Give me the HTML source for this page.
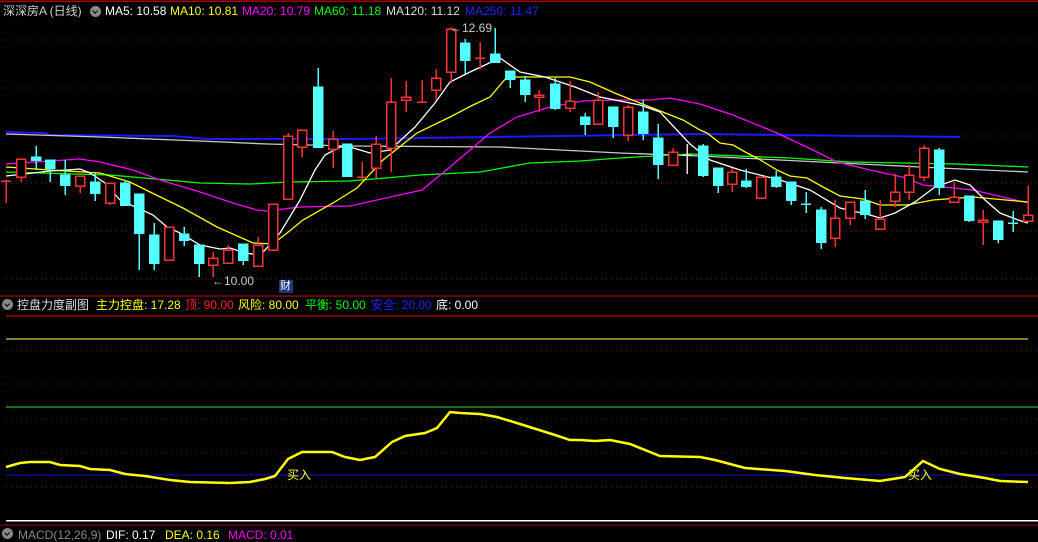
<!DOCTYPE html>
<html><head><meta charset="utf-8"><style>
html,body{margin:0;padding:0;background:#000;width:1038px;height:532px;overflow:hidden}
.t{position:absolute;font-family:"Liberation Sans","Noto Sans CJK SC",sans-serif;font-size:12px;white-space:nowrap;line-height:14px}
.ic{position:absolute;width:11px;height:11px;border-radius:50%;background:#888}
.ic:after{content:"";position:absolute;left:3px;top:3px;width:3px;height:3px;border-right:1.5px solid #000;border-bottom:1.5px solid #000;transform:rotate(45deg)}
</style></head><body>
<svg width="1038" height="532" style="position:absolute;left:0;top:0">
<g shape-rendering="crispEdges">
<line x1="0" y1="1" x2="1038" y2="1" stroke="#a00" stroke-width="1.5"/>
<g stroke="#8a1010" stroke-dasharray="1,4">
<line x1="6" y1="40" x2="1038" y2="40"/><line x1="6" y1="88" x2="1038" y2="88"/><line x1="6" y1="136" x2="1038" y2="136"/><line x1="6" y1="183" x2="1038" y2="183"/><line x1="6" y1="231" x2="1038" y2="231"/><line x1="6" y1="279" x2="1038" y2="279"/>
<line x1="6" y1="350" x2="1038" y2="350"/><line x1="6" y1="384" x2="1038" y2="384"/><line x1="6" y1="419" x2="1038" y2="419"/><line x1="6" y1="453" x2="1038" y2="453"/><line x1="6" y1="487" x2="1038" y2="487"/>
</g>
<line x1="0" y1="296" x2="1038" y2="296" stroke="#c00"/>
<line x1="6" y1="316" x2="1038" y2="316" stroke="#e00"/>
<line x1="6" y1="339" x2="1028" y2="339" stroke="#ffff40"/>
<line x1="6" y1="407" x2="1038" y2="407" stroke="#30e030"/>
<line x1="6" y1="475" x2="1038" y2="475" stroke="#1010d0"/>
<line x1="6" y1="520.5" x2="1038" y2="520.5" stroke="#fff" stroke-width="1.5"/>
<line x1="0" y1="525" x2="1038" y2="525" stroke="#900"/>
</g>
<g fill="none" stroke-width="1.3">
<polyline stroke="#1a1aff" stroke-width="2" points="6,132 43,133 50,135 173,136 207,139 350,139 560,136 700,134 960,137"/>
<polyline stroke="#c8c8c8" points="6,134 100,137 200,141 267,144 350,146 500,147 620,153 700,156 940,168 1028,172"/>
<polyline stroke="#00ff00" points="6,172 110,175 167,180 200,183 250,184 290,182 350,181 420,175 480,172 530,163 580,161 620,158 690,154 790,158 850,162 957,164 1028,167"/>
<polyline stroke="#ff00ff" points="6,164 50,161 80,159 100,162 133,170 160,180 200,192 233,203 257,210 267,211 300,207 350,206 422,190 450,167 490,133 517,117 550,107 583,101 617,100 650,100 670,98 700,104 733,115 777,133 813,150 837,162 870,170 907,178 923,185 973,190 1007,198 1028,203"/>
<polyline stroke="#ffff00" points="6,167 50,170 100,173 130,182 150,192 183,208 217,227 253,243 273,244 287,233 303,220 333,203 357,188 383,160 417,133 450,117 473,105 490,97 507,77 570,77 590,82 617,94 650,107 683,120 700,130 707,133 720,143 733,145 747,153 757,158 777,170 790,176 807,178 823,187 840,196 863,199 880,205 907,205 933,200 973,197 1028,202"/>
<polyline stroke="#ffffff" points="6,176 33,173 50,171 67,170 80,169 90,173 105,183 120,200 153,215 167,227 180,233 200,245 220,249 230,248 245,253 260,255 265,250 280,233 300,200 315,170 325,155 340,147 350,147 370,153 390,150 415,127 435,103 450,82 470,72 500,58 520,72 545,77 575,87 600,97 640,105 660,112 690,144 710,160 740,170 780,180 810,190 840,208 870,215 880,218 895,213 915,202 935,187 955,180 970,185 985,200 1000,213 1018,220 1028,223"/>
<polyline stroke="#ffff00" stroke-width="2.5" points="6,467 20,463 30,462 50,462 60,465 80,466 90,469 110,470 125,474 145,476 170,480 190,482 230,483 250,482 265,479 275,476 288,459 302,452 332,452 345,457 360,460 375,457 392,442 405,436 425,433 437,428 450,412 460,413 480,414 497,417 520,424 555,435 570,440 580,440 595,441 610,440 630,444 660,456 700,457 715,460 745,468 785,471 815,475 845,478 880,481 905,477 923,461 940,469 960,474 985,478 1000,481 1028,482"/>
</g>
<g shape-rendering="crispEdges" stroke-width="1.5">
<g stroke="#ff3232" fill="#000">
<line x1="6" y1="180" x2="6" y2="203"/><line x1="1" y1="181" x2="11" y2="181"/>
<line x1="21" y1="159" x2="21" y2="182"/><rect x="16.5" y="159" width="9" height="18"/>
<line x1="80" y1="176" x2="80" y2="193"/><rect x="75.5" y="176" width="9" height="10"/>
<line x1="110" y1="183" x2="110" y2="205"/><rect x="105.5" y="183" width="9" height="20"/>
<rect x="164.5" y="227" width="9" height="33"/>
<line x1="213" y1="252" x2="213" y2="277"/><rect x="208.5" y="258" width="9" height="7"/>
<line x1="228" y1="245" x2="228" y2="263"/><rect x="223.5" y="250" width="9" height="13"/>
<line x1="258" y1="237" x2="258" y2="266"/><rect x="253.5" y="245" width="9" height="21"/>
<rect x="268.5" y="204" width="9" height="46"/>
<line x1="288" y1="133" x2="288" y2="200"/><rect x="283.5" y="136" width="9" height="63"/>
<line x1="302" y1="130" x2="302" y2="157"/><rect x="297.5" y="130" width="9" height="17"/>
<line x1="333" y1="131" x2="333" y2="168"/><rect x="328.5" y="139" width="9" height="10"/>
<line x1="362" y1="162" x2="362" y2="180"/><line x1="357" y1="177" x2="367" y2="177"/>
<line x1="376" y1="136" x2="376" y2="178"/><rect x="371.5" y="144" width="9" height="24"/>
<line x1="391" y1="78" x2="391" y2="172"/><rect x="386.5" y="102" width="9" height="46"/>
<line x1="406" y1="81" x2="406" y2="112"/><rect x="401.5" y="97" width="9" height="3"/>
<line x1="422" y1="80" x2="422" y2="103"/><line x1="417" y1="102" x2="427" y2="102"/>
<line x1="436" y1="69" x2="436" y2="100"/><rect x="431.5" y="78" width="9" height="12"/>
<line x1="451" y1="27" x2="451" y2="83"/><rect x="446.5" y="29" width="9" height="43"/>
<line x1="480" y1="42" x2="480" y2="69"/><line x1="475" y1="58" x2="485" y2="58"/>
<line x1="539" y1="90" x2="539" y2="112"/><rect x="534.5" y="95" width="9" height="2"/>
<line x1="570" y1="81" x2="570" y2="112"/><rect x="565.5" y="101" width="9" height="7"/>
<line x1="598" y1="92" x2="598" y2="124"/><rect x="593.5" y="100" width="9" height="24"/>
<line x1="628" y1="105" x2="628" y2="141"/><rect x="623.5" y="107" width="9" height="28"/>
<line x1="673" y1="148" x2="673" y2="165"/><rect x="668.5" y="152" width="9" height="13"/>
<line x1="732" y1="168" x2="732" y2="192"/><rect x="727.5" y="172" width="9" height="12"/>
<rect x="756.5" y="177" width="9" height="21"/>
<line x1="835" y1="200" x2="835" y2="247"/><rect x="830.5" y="218" width="9" height="20"/>
<line x1="850" y1="202" x2="850" y2="225"/><rect x="845.5" y="202" width="9" height="16"/>
<line x1="880" y1="200" x2="880" y2="229"/><rect x="875.5" y="219" width="9" height="10"/>
<line x1="895" y1="174" x2="895" y2="207"/><rect x="890.5" y="192" width="9" height="9"/>
<line x1="909" y1="165" x2="909" y2="200"/><rect x="904.5" y="175" width="9" height="17"/>
<line x1="924" y1="145" x2="924" y2="181"/><rect x="919.5" y="148" width="9" height="29"/>
<line x1="954" y1="182" x2="954" y2="202"/><rect x="949.5" y="197" width="9" height="5"/>
<line x1="983" y1="210" x2="983" y2="245"/><rect x="978.5" y="220" width="9" height="2"/>
<line x1="1028" y1="186" x2="1028" y2="221"/><rect x="1023.5" y="215" width="9" height="6"/>
</g>
<g stroke="#54ffff" fill="#54ffff">
<line x1="36" y1="146" x2="36" y2="170"/><rect x="31.5" y="157" width="9" height="3"/>
<line x1="50" y1="160" x2="50" y2="182"/><rect x="45.5" y="160" width="9" height="8"/>
<line x1="65" y1="160" x2="65" y2="195"/><rect x="60.5" y="175" width="9" height="10"/>
<line x1="95" y1="173" x2="95" y2="201"/><rect x="90.5" y="182" width="9" height="11"/>
<line x1="125" y1="180" x2="125" y2="205"/><rect x="120.5" y="183" width="9" height="22"/>
<line x1="139" y1="194" x2="139" y2="270"/><rect x="134.5" y="194" width="9" height="39"/>
<line x1="154" y1="223" x2="154" y2="270"/><rect x="149.5" y="235" width="9" height="28"/>
<line x1="184" y1="227" x2="184" y2="246"/><rect x="179.5" y="234" width="9" height="6"/>
<line x1="199" y1="245" x2="199" y2="277"/><rect x="194.5" y="245" width="9" height="18"/>
<line x1="243" y1="244" x2="243" y2="265"/><rect x="238.5" y="244" width="9" height="16"/>
<line x1="318" y1="68" x2="318" y2="147"/><rect x="313.5" y="87" width="9" height="60"/>
<rect x="342.5" y="144" width="9" height="32"/>
<line x1="465" y1="39" x2="465" y2="74"/><rect x="460.5" y="43" width="9" height="17"/>
<line x1="495" y1="28" x2="495" y2="62"/><rect x="490.5" y="54" width="9" height="8"/>
<line x1="510" y1="71" x2="510" y2="88"/><rect x="505.5" y="71" width="9" height="8"/>
<line x1="525" y1="76" x2="525" y2="102"/><rect x="520.5" y="80" width="9" height="14"/>
<line x1="555" y1="78" x2="555" y2="110"/><rect x="550.5" y="84" width="9" height="24"/>
<line x1="585" y1="113" x2="585" y2="135"/><rect x="580.5" y="117" width="9" height="7"/>
<line x1="613" y1="107" x2="613" y2="138"/><rect x="608.5" y="107" width="9" height="19"/>
<line x1="643" y1="100" x2="643" y2="140"/><rect x="638.5" y="112" width="9" height="21"/>
<line x1="658" y1="124" x2="658" y2="179"/><rect x="653.5" y="138" width="9" height="26"/>
<line x1="703" y1="144" x2="703" y2="177"/><rect x="698.5" y="146" width="9" height="29"/>
<line x1="718" y1="168" x2="718" y2="193"/><rect x="713.5" y="168" width="9" height="17"/>
<line x1="746" y1="169" x2="746" y2="188"/><rect x="741.5" y="181" width="9" height="5"/>
<line x1="776" y1="171" x2="776" y2="188"/><rect x="771.5" y="177" width="9" height="9"/>
<line x1="791" y1="182" x2="791" y2="205"/><rect x="786.5" y="182" width="9" height="18"/>
<line x1="806" y1="192" x2="806" y2="213"/><line x1="801" y1="204" x2="811" y2="204"/>
<line x1="821" y1="207" x2="821" y2="249"/><rect x="816.5" y="210" width="9" height="32"/>
<line x1="865" y1="190" x2="865" y2="219"/><rect x="860.5" y="201" width="9" height="13"/>
<line x1="939" y1="148" x2="939" y2="195"/><rect x="934.5" y="150" width="9" height="37"/>
<line x1="969" y1="196" x2="969" y2="222"/><rect x="964.5" y="196" width="9" height="24"/>
<line x1="998" y1="221" x2="998" y2="243"/><rect x="993.5" y="221" width="9" height="18"/>
<line x1="1013" y1="211" x2="1013" y2="232"/><line x1="1008" y1="223" x2="1018" y2="223"/>
</g>
<g stroke="#ddd"><line x1="687" y1="144" x2="687" y2="174"/><line x1="682" y1="155" x2="692" y2="155"/></g>
</g>
<rect x="279" y="280" width="14" height="13" fill="#1a3a7a"/>
</svg>
<div class="t" style="left:3px;top:4px;color:#d0d0d0">深深房A (日线)</div>
<div class="ic" style="left:90px;top:6px"></div>
<div class="t" style="left:105px;top:4px;color:#fff">MA5: 10.58</div>
<div class="t" style="left:170px;top:4px;color:#ff0">MA10: 10.81</div>
<div class="t" style="left:242px;top:4px;color:#f0f">MA20: 10.79</div>
<div class="t" style="left:314px;top:4px;color:#0f0">MA60: 11.18</div>
<div class="t" style="left:386px;top:4px;color:#ddd">MA120: 11.12</div>
<div class="t" style="left:465px;top:4px;color:#22f">MA250: 11.47</div>
<div class="t" style="left:450px;top:21px;color:#ccc">←12.69</div>
<div class="t" style="left:212px;top:274px;color:#ccc">←10.00</div>
<div class="t" style="left:280px;top:279px;color:#fff;font-size:11px">财</div>
<div class="ic" style="left:2px;top:299px"></div>
<div class="t" style="left:17px;top:298px;color:#ddd">控盘力度副图</div>
<div class="t" style="left:96px;top:298px;color:#ff0">主力控盘: 17.28</div>
<div class="t" style="left:185px;top:298px;color:#f22">顶: 90.00</div>
<div class="t" style="left:238px;top:298px;color:#ff0">风险: 80.00</div>
<div class="t" style="left:305px;top:298px;color:#0f0">平衡: 50.00</div>
<div class="t" style="left:371px;top:298px;color:#22f">安全: 20.00</div>
<div class="t" style="left:436px;top:298px;color:#fff">底: 0.00</div>
<div class="t" style="left:287px;top:468px;color:#ff0;font-size:12px">买入</div>
<div class="t" style="left:908px;top:468px;color:#ff0;font-size:12px">买入</div>
<div class="ic" style="left:2px;top:528px"></div>
<div class="t" style="left:18px;top:528px;color:#888">MACD(12,26,9)</div>
<div class="t" style="left:106px;top:528px;color:#fff">DIF: 0.17</div>
<div class="t" style="left:165px;top:528px;color:#ff0">DEA: 0.16</div>
<div class="t" style="left:228px;top:528px;color:#f0f">MACD: 0.01</div>
</body></html>
